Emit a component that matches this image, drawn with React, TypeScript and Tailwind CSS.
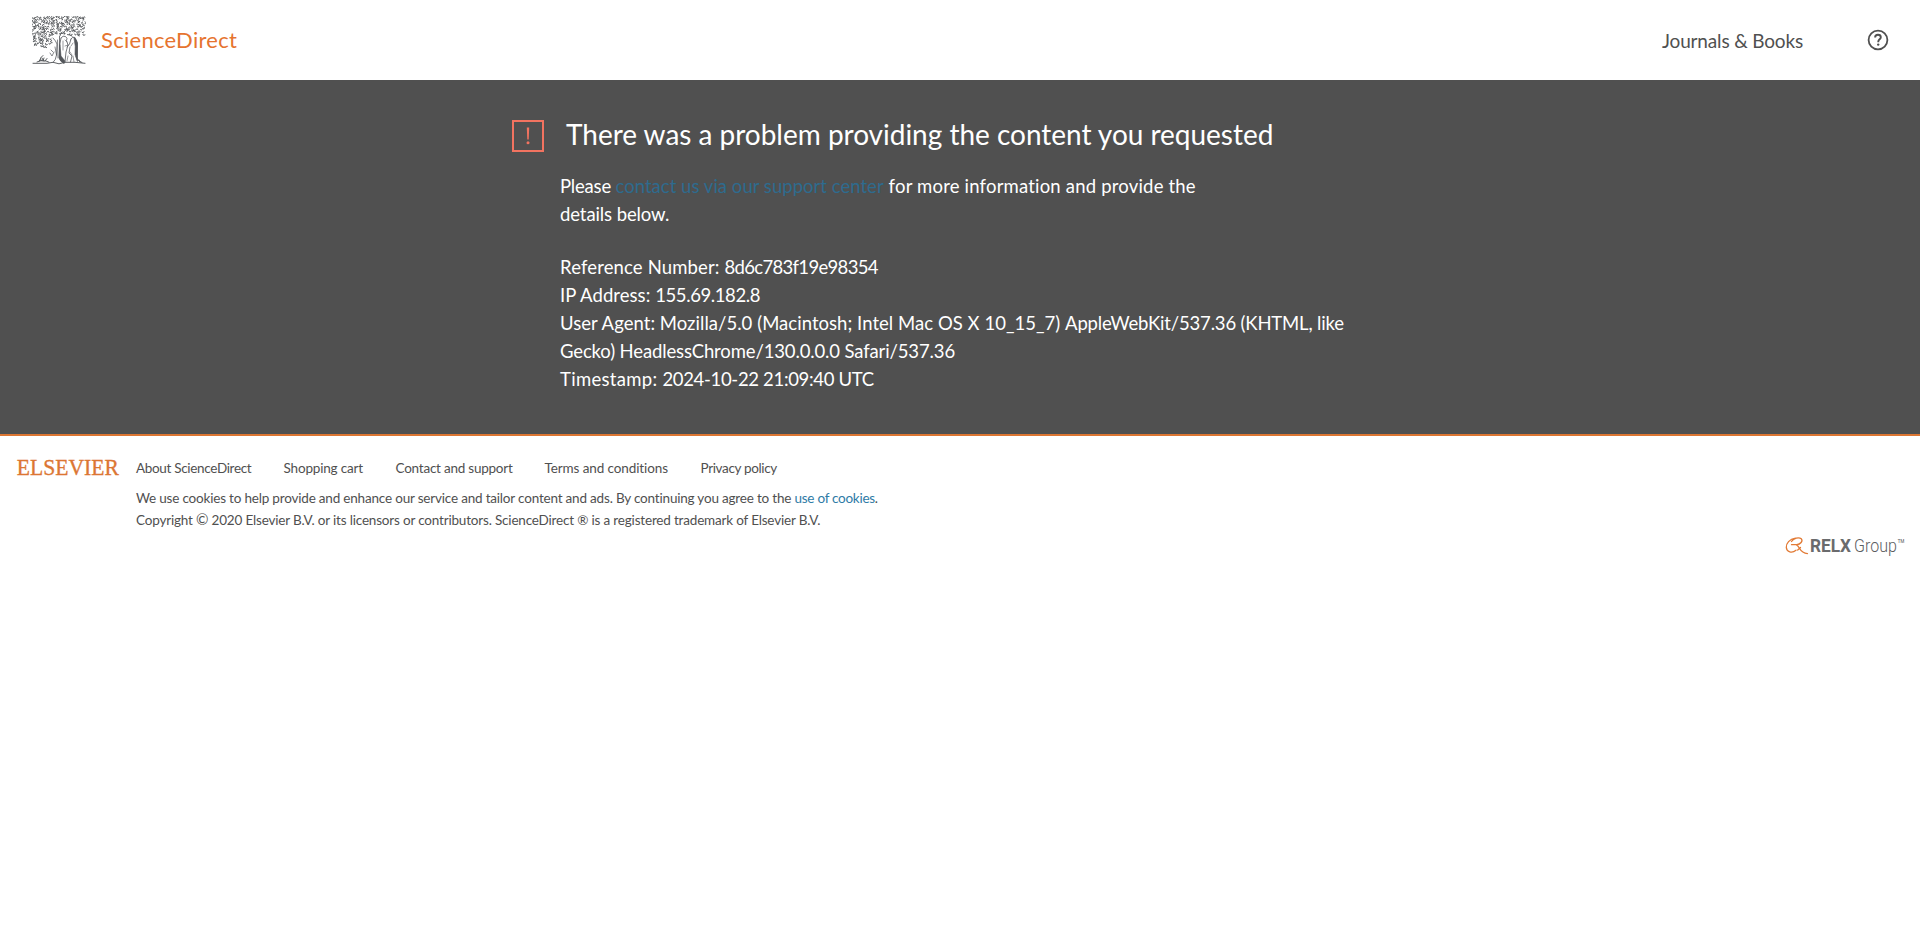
import React from 'react';

const foliage = (() => {
  let seed = 7;
  const rand = () => {
    seed = (seed * 16807) % 2147483647;
    return seed / 2147483647;
  };
  const inside = (x: number, y: number) =>
    (y < 19 && x > 0.5 && x < 53) || (y >= 19 && y < 30 && x > 1 && x < 21 - Math.abs(y - 25) * 0.6);
  let d = '';
  for (let y = 1.2; y < 30; y += 2.4) {
    for (let x = 1.2; x < 54; x += 2.6) {
      const px = x + rand() * 1.2 - 0.6;
      const py = y + rand() * 1.2 - 0.6;
      const turn = rand() * 6.28;
      if (!inside(px, py)) continue;
      const a = Math.cos(turn) * 2.3;
      const b = Math.sin(turn) * 2.3;
      d += `M${px.toFixed(1)} ${py.toFixed(1)}q${a.toFixed(1)} ${b.toFixed(1)} ${(b * 0.9).toFixed(1)} ${(-a * 0.9).toFixed(1)}`;
    }
  }
  return d;
})();

function TreeLogo() {
  return (
    <svg width="54" height="49" viewBox="0 0 54 49" fill="none" stroke="#53565a" strokeLinecap="round">
      <path d={foliage} strokeWidth="0.95" />
      <path d="M21 22q3 3 4 6l-.5 11q-.5 5-3.500 7.500M27.500 20v14l.5 9" strokeWidth="0.8" />
      <path d="M18 37l2 3 2-4M19 34l2 2M23 31l1.500 8M25.500 24l.5 18" strokeWidth="0.7" />
      <path d="M29 22q2-3 4.500-1.500t1 4L36 29l-2 7-1 10M29 22l-1.500 8 .5 11 4 6M39 23q1.500-3 4-1.500L45.500 27l-.5 17M39 23l-1.500 5-2.500 3M38 31l-1 6 3 3-1.500 6" strokeWidth="0.8" />
      <path d="M42 21.500q3.500 2 3.500 8v16l-2.500-7q1-8-1-16.500zM28 29l1 11 4 5-1 2.500q-4-2-5-5.500z" fill="#53565a" strokeWidth="0.6" />
      <path d="M31 25v9M33 30l3-1M38 36l2 3M41 40l1 6M36 40l-1 5M33 24l2 2M41 27l-2 3" strokeWidth="0.6" />
      <path d="M1 47.300h14l6-1 6 1.500 6-1.500h10l10 1M5 46l4-1.500 5 .5 3 1.200M9 45l-.5-3 2.500-2.500M11 45l1-3M13 45l2-2.500M10 42l1.500 3M7 45.500l1-2M44 41l3 4 3 1.500M47 44l1 2" strokeWidth="0.95" />
    </svg>
  );
}

function HelpIcon() {
  return (
    <svg width="22" height="22" viewBox="0 0 22 22" fill="none" stroke="#505050">
      <circle cx="11" cy="11" r="9.400" strokeWidth="1.800" />
      <path d="M8.100 8.400c0-1.700 1.200-2.700 2.900-2.700s2.800 1 2.800 2.500c0 2-2.500 2.200-2.500 4.400v.6" strokeWidth="1.900" />
      <circle cx="11.200" cy="15.600" r="1.200" fill="#505050" stroke="none" />
    </svg>
  );
}

function RelxLogo() {
  return (
    <svg width="126" height="24" viewBox="0 0 126 24">
      <path
        d="M6.500 5.500C8.500 2 14 .8 16.300 2.800c2 2.400-1 5.400-4.500 5.900H6.500M10.500 2.200C4.500 3 1 7.500 1.300 11.500c.4 4.600 5.700 6 9.700 2.700M11 8.700c4 .8 3 8.700 11.500 8.900M15.500 11.500l-2.800 2.500"
        fill="none"
        stroke="#e27a35"
        strokeWidth="1.300"
        strokeLinecap="round"
      />
      <text x="25" y="16" fontFamily="Roboto, sans-serif" fontWeight="700" fontSize="18.500" fill="#6a6b6d" textLength="41" lengthAdjust="spacingAndGlyphs">RELX</text>
      <text x="69" y="16" fontFamily="Roboto, sans-serif" fontWeight="350" fontSize="18.500" fill="#5c5d5f" textLength="51" lengthAdjust="spacingAndGlyphs">Group<tspan fontSize="15" dy="-2.500">™</tspan></text>
    </svg>
  );
}

export default function App() {
  return (
    <div className="min-h-[941px] bg-white font-['Lato',sans-serif] text-[#505050] [font-variant-ligatures:none]">
      <header className="flex h-20 items-center pl-8 pr-[31px]">
        <a className="flex items-center" href="#">
          <TreeLogo />
          <span className="ml-[15px] pb-0.5 text-[22px] tracking-[0.28px] text-[#e6742f]">ScienceDirect</span>
        </a>
        <a className="ml-auto pt-0.5 text-[19px] tracking-[-0.16px]" href="#">Journals &amp; Books</a>
        <a className="ml-16" href="#" aria-label="Help"><HelpIcon /></a>
      </header>

      <main className="h-[356px] border-b-2 border-[#dc7633] bg-[#505050] pl-[512px] pt-[34px] text-white">
        <div className="flex">
          <span className="mt-1.5 flex size-8 justify-center border-2 border-[#f27360]">
            <svg width="6" height="28" viewBox="0 0 6 28" fill="#f27360">
              <path d="M1.800 5.500h2.400l-.5 12H2.300z" />
              <circle cx="3" cy="20.700" r="1.500" />
            </svg>
          </span>
          <h1 className="ml-[22px] text-[28px] leading-10 tracking-[-0.02px]">There was a problem providing the content you requested</h1>
        </div>
        <div className="ml-12 mt-[18px] text-[18.5px] leading-7">
          <p>
            <span className="tracking-[-0.2px]">Please </span>
            <a className="tracking-[0.03px] text-[#2e6b8e]" href="#">contact us via our support center</a>
            <span className="tracking-[0.19px]"> for more information and provide the</span>
            <br />
            <span className="tracking-[-0.1px]">details below.</span>
          </p>
          <div className="mt-[25px]">
            <p className="tracking-[-0.68px]"><span className="tracking-[0.14px]">Reference Number: </span>8d6c783f19e98354</p>
            <p className="tracking-[-0.4px]"><span className="tracking-[0.06px]">IP Address: </span>155.69.182.8</p>
            <p className="tracking-[-0.17px]"><span className="tracking-[0.04px]">User Agent: Mozilla/5.0 (Macintosh; Intel Mac OS X 10_15_7) </span>AppleWebKit/537.36 (KHTML, like</p>
            <p className="tracking-[-0.13px]">Gecko) HeadlessChrome/130.0.0.0 Safari/537.36</p>
            <p className="tracking-[-0.33px]"><span className="tracking-[0.3px]">Timestamp: </span>2024-10-22 21:09:40 UTC</p>
          </div>
        </div>
      </main>

      <footer className="flex pl-3 pr-[9px] pt-[17px] text-[13.5px] leading-[22px]">
        <svg className="shrink-0" width="112" height="36" viewBox="-4 -4 112 36">
          <text x="0.800" y="18" fontFamily="Liberation Serif, serif" fontSize="24" fill="#dc7633" stroke="#dc7633" strokeWidth="0.350" textLength="102" lengthAdjust="spacingAndGlyphs">ELSEVIER</text>
        </svg>
        <div className="ml-3 pt-1">
          <nav className="flex gap-8">
            <a className="w-[115.5px] whitespace-nowrap tracking-[-0.32px]" href="#">About ScienceDirect</a>
            <a className="w-[80px] whitespace-nowrap tracking-[-0.17px]" href="#">Shopping cart</a>
            <a className="w-[117px] whitespace-nowrap tracking-[-0.23px]" href="#">Contact and support</a>
            <a className="w-[124px] whitespace-nowrap tracking-[-0.1px]" href="#">Terms and conditions</a>
            <a className="whitespace-nowrap tracking-[-0.34px]" href="#">Privacy policy</a>
          </nav>
          <p className="mt-2 tracking-[-0.19px]">
            We use cookies to help provide and enhance our service and tailor content and ads. By continuing you agree to the{' '}
            <a className="tracking-[-0.27px] text-[#2e7ba6]" href="#">use of cookies</a>.
          </p>
          <p className="tracking-[-0.18px]">Copyright <span className="text-[15px] leading-none">©</span> 2020 Elsevier B.V. or its licensors or contributors. ScienceDirect ® is a registered trademark of Elsevier B.V.</p>
        </div>
        <div className="ml-auto pt-[83px]"><RelxLogo /></div>
      </footer>
    </div>
  );
}
